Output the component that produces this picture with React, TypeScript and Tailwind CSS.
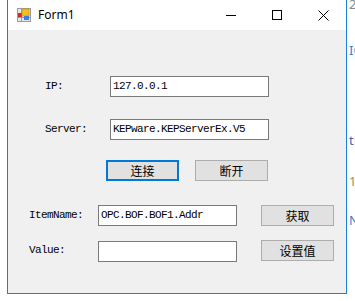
import React from 'react';

const mono = "font-[family-name:'Liberation_Mono',monospace] text-[11px] tracking-[-0.6px] text-black";
const cjk = "font-['Noto_Sans_CJK_SC','Noto_Sans',sans-serif] text-[12px] text-black";

const TextBox = ({ value, width }: { value: string; width: string }) => (
  <div className={`${width} h-[21px] bg-white border border-[#7a7a7a] flex items-center pl-[2px] ${mono} overflow-hidden whitespace-nowrap`}>
    {value}
  </div>
);

const Button = ({ text, focused }: { text: string; focused?: boolean }) => (
  <div
    className={`w-[73px] h-[21px] bg-[#e1e1e1] flex items-center justify-center leading-none ${cjk} ${
      focused ? 'border-2 border-[#0078d7]' : 'border border-[#adadad]'
    }`}
  >
    {text}
  </div>
);

const FormIcon = () => (
  <svg width="14" height="14" viewBox="0 0 14 14">
    <rect x="0.5" y="0.5" width="13" height="13" fill="#e8e8e8" stroke="#9a9a9a" />
    <line x1="0.5" y1="9.5" x2="13.5" y2="9.5" stroke="#9a9a9a" />
    <line x1="4.5" y1="0.5" x2="4.5" y2="13.5" stroke="#9a9a9a" />
    <rect x="1" y="5" width="4" height="4" fill="#d22b2b" />
    <rect x="5" y="1" width="7" height="7" fill="#f5c21b" stroke="#c99612" strokeWidth="0.8" />
    <rect x="7" y="8" width="5" height="4" fill="#3d7fe0" />
  </svg>
);

export default function App() {
  return (
    <div className="w-[355px] h-[301px] bg-white flex overflow-hidden">
      <div className="w-[7px] shrink-0" />
      <div className="w-[340px] h-[294px] shrink-0 border-x border-b border-[#1883d7] flex flex-col">
        {/* title bar */}
        <div className="h-[30px] bg-white flex items-center">
          <div className="ml-[9px] mt-[-1px]">
            <FormIcon />
          </div>
          <div className="ml-[7px] font-['Noto_Sans','Open_Sans',sans-serif] text-[12px] text-black mt-[-1px]">Form1</div>
          <div className="ml-auto flex h-full">
            <div className="w-[46px] h-full flex items-center justify-center">
              <div className="w-[10px] h-px bg-black" />
            </div>
            <div className="w-[46px] h-full flex items-center justify-center">
              <div className="w-[10px] h-[10px] border border-black" />
            </div>
            <div className="w-[46px] h-full flex items-center justify-center">
              <svg width="11" height="11" viewBox="0 0 11 11">
                <path d="M0.5 0.5 L10.5 10.5 M10.5 0.5 L0.5 10.5" stroke="#000" strokeWidth="1" />
              </svg>
            </div>
          </div>
        </div>
        {/* client area */}
        <div className="flex-1 bg-[#f0f0f0] flex flex-col pt-[46px]">
          <div className="flex items-center">
            <div className={`w-[102px] pl-[37px] ${mono}`}>IP:</div>
            <TextBox value="127.0.0.1" width="w-[159px]" />
          </div>
          <div className="flex items-center mt-[22px]">
            <div className={`w-[102px] pl-[37px] ${mono}`}>Server:</div>
            <TextBox value="KEPware.KEPServerEx.V5" width="w-[159px]" />
          </div>
          <div className="flex items-center mt-[20px] pl-[98px] gap-[16px]">
            <Button text="连接" focused />
            <Button text="断开" />
          </div>
          <div className="flex items-center mt-[24px]">
            <div className={`w-[90px] pl-[21px] ${mono}`}>ItemName:</div>
            <TextBox value="OPC.BOF.BOF1.Addr" width="w-[139px]" />
            <div className="ml-[24px]">
              <Button text="获取" />
            </div>
          </div>
          <div className="flex items-center mt-[13px]">
            <div className={`w-[90px] pl-[21px] ${mono}`}>Value:</div>
            <div className="mt-[2px]">
              <TextBox value="" width="w-[139px]" />
            </div>
            <div className="ml-[24px]">
              <Button text="设置值" />
            </div>
          </div>
        </div>
      </div>
      {/* edge of the window behind */}
      <div className="flex-1 flex flex-col pl-[2px] font-['Noto_Sans',sans-serif] text-[13px] leading-none">
        <div className="text-[#8a8a8a] mt-[-2px]">2</div>
        <div className="text-[#3c7ad6] mt-[33px]">IC</div>
        <div className="text-[#4a5fc0] mt-[77px]">tE</div>
        <div className="text-[#b08a50] mt-[28px]">1</div>
        <div className="text-[#3c7ad6] mt-[26px]">N</div>
      </div>
    </div>
  );
}
